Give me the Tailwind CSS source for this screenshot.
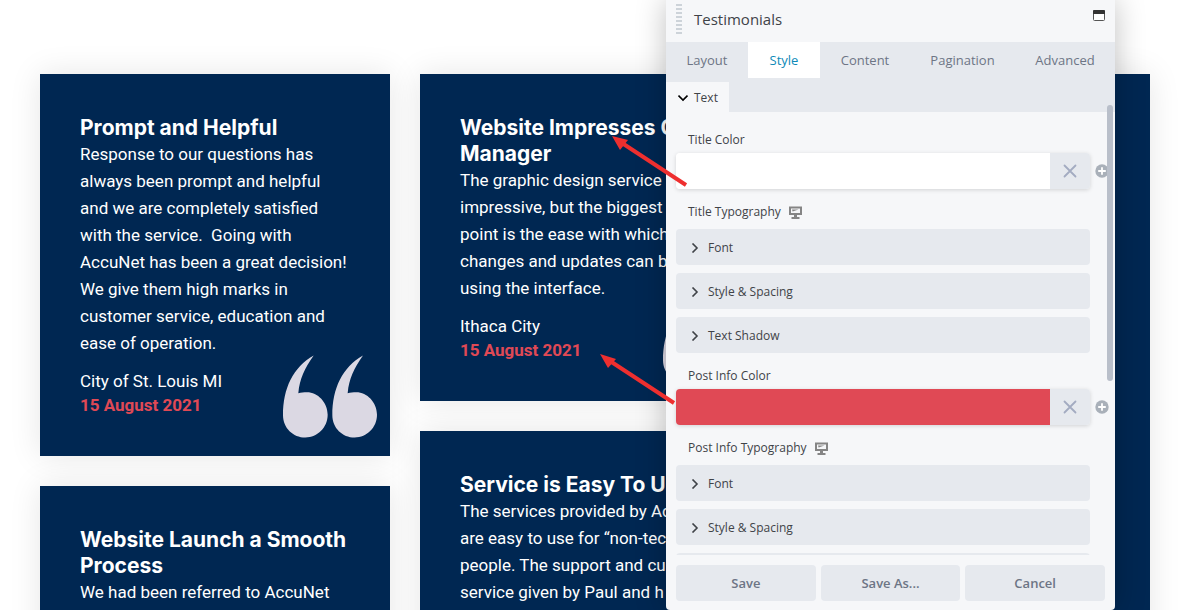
<!DOCTYPE html>
<html lang="en">
<head>
  <meta charset="UTF-8">
  <meta name="viewport" content="width=device-width, initial-scale=1.0">
  <title>Testimonials</title>
  <script src="https://cdn.jsdelivr.net/npm/@tailwindcss/browser@4"></script>
</head>
<body class="bg-white h-screen overflow-hidden relative">
  <!-- Shared icons -->
  <svg class="hidden">
    <symbol id="quote" viewBox="0 0 282 248">
      <path id="mark" d="M92 1C30 36 0 100 0 180C0 218 30 247 67 247C104 247 134 217 134 179C134 141 104 111 72 111C62 111 54 112 46 114C50 70 65 40 92 1Z" />
      <use href="#mark" x="148" />
    </symbol>
    <symbol id="chevron" viewBox="0 0 10 10">
      <path d="M2.5 .5L7 5 2.5 9.5" fill="none" stroke="currentColor" stroke-width="1.6" />
    </symbol>
    <symbol id="cross" viewBox="0 0 14 14">
      <path d="M1.5 1.5l11 11M12.5 1.5l-11 11" fill="none" stroke="currentColor" stroke-width="1.8" stroke-linecap="round" />
    </symbol>
    <symbol id="plus" viewBox="0 0 14 14">
      <circle cx="7" cy="7" r="6.7" fill="currentColor" />
      <path d="M7 3.2v7.6M3.2 7h7.6" stroke="#fff" stroke-width="1.8" />
    </symbol>
    <symbol id="desktop" viewBox="0 0 13 13">
      <path d="M1 1.5h11v6.5H1z" fill="none" stroke="currentColor" stroke-width="2" />
      <path d="M3 3.4h6.5L3.6 5.6zM5 9h3v2h2.5v2h-8v-2H5z" fill="currentColor" />
    </symbol>
  </svg>

  <main class="grid grid-cols-3 items-start gap-[30px] w-full max-w-[1190px] pl-10 pr-[33px] pt-[74px] font-[Roboto,sans-serif] text-[17px] leading-[27px] text-white">
    <div class="flex flex-col gap-[30px]">
      <article class="relative bg-[#002752] px-10 pt-[41px] pb-[39px] shadow-[0_0_30px_rgba(0,0,0,0.1)]">
        <h2 class="font-[Inter,sans-serif] font-bold text-[21px] leading-[26px] whitespace-nowrap">Prompt and Helpful</h2>
        <p class="whitespace-nowrap">Response to our questions has<br>always been prompt and helpful<br>and we are completely satisfied<br>with the service.&nbsp; Going with<br>AccuNet has been a great decision!<br>We give them high marks in<br>customer service, education and<br>ease of operation.</p>
        <div class="mt-3 leading-6">City of St. Louis MI</div>
        <div class="leading-6 font-bold text-[#e04955]">15 August 2021</div>
        <svg class="absolute right-[13px] bottom-[18px] w-[94px] h-[83px] fill-[#dbd8e3]"><use href="#quote" /></svg>
      </article>
      <article class="relative bg-[#002752] px-10 pt-[41px] pb-[39px] shadow-[0_0_30px_rgba(0,0,0,0.1)]">
        <h2 class="font-[Inter,sans-serif] font-bold text-[21px] leading-[26px] whitespace-nowrap">Website Launch a Smooth<br>Process</h2>
        <p class="whitespace-nowrap">We had been referred to AccuNet</p>
      </article>
    </div>
    <div class="flex flex-col gap-[30px]">
      <article class="relative bg-[#002752] px-10 pt-[41px] pb-[39px] shadow-[0_0_30px_rgba(0,0,0,0.1)]">
        <h2 class="font-[Inter,sans-serif] font-bold text-[21px] leading-[26px] whitespace-nowrap">Website Impresses C<br>Manager</h2>
        <p class="whitespace-nowrap">The graphic design service<br>impressive, but the biggest<br>point is the ease with which<br>changes and updates can b<br>using the interface.</p>
        <div class="mt-3 leading-6">Ithaca City</div>
        <div class="leading-6 font-bold text-[#e04955]">15 August 2021</div>
        <svg class="absolute right-[13px] bottom-[18px] w-[94px] h-[83px] fill-[#dbd8e3]"><use href="#quote" /></svg>
      </article>
      <article class="relative bg-[#002752] px-10 pt-[41px] pb-[39px] shadow-[0_0_30px_rgba(0,0,0,0.1)]">
        <h2 class="font-[Inter,sans-serif] font-bold text-[21px] leading-[26px] whitespace-nowrap">Service is Easy To Us</h2>
        <p class="whitespace-nowrap">The services provided by Ac<br>are easy to use for “non-tec<br>people. The support and cus<br>service given by Paul and h</p>
      </article>
    </div>
    <article class="h-screen bg-[#002752] shadow-[0_0_30px_rgba(0,0,0,0.1)]"></article>
  </main>

  <!-- Settings panel -->
  <section class="absolute right-[68px] top-0 w-[449px] h-full flex flex-col rounded-b bg-[#f6f7f9] shadow-[0_0_30px_rgba(0,0,0,0.25)] font-['Open_Sans',sans-serif] text-xs text-[#404348] overflow-hidden">
    <header class="h-[42px] shrink-0 flex items-center px-[10px] pb-1">
      <svg class="w-[6px] h-[30px]" viewBox="0 0 6 30" fill="#cdd3d9"><path d="M0 0h6v2H0zM0 4h6v2H0zM0 8h6v2H0zM0 12h6v2H0zM0 16h6v2H0zM0 20h6v2H0zM0 24h6v2H0zM0 28h6v2H0z" /></svg>
      <h1 class="ml-3 text-[15px]">Testimonials</h1>
      <button class="ml-auto mb-2" aria-label="Expand">
        <svg class="w-3 h-[11px]" viewBox="0 0 12 11"><rect x=".5" y=".5" width="11" height="10" rx="1" fill="#fff" stroke="#555" /><path d="M0 1q0-1 1-1h10q1 0 1 1v3H0z" fill="#333" /></svg>
      </button>
    </header>
    <div class="shrink-0 bg-[#e6e9ee]">
      <nav class="flex h-9 text-[13px] text-[#6d7585]">
        <button class="w-[82px] pt-[2px]">Layout</button>
        <button class="w-[72px] pt-[2px] bg-white text-[#0e8ab8]">Style</button>
        <button class="w-[90px] pt-[2px]">Content</button>
        <button class="w-[105px] pt-[2px]">Pagination</button>
        <button class="flex-1 pt-[2px]">Advanced</button>
      </nav>
      <button class="mt-1 h-[30px] w-[63px] pl-3 pt-[2px] flex items-center gap-[6px] bg-[#f6f7f9]">
        <svg class="w-[10px] h-[10px] rotate-90 text-black"><use href="#chevron" /></svg>Text
      </button>
    </div>
    <div class="relative flex-1 min-h-0 overflow-hidden pl-[10px] pr-[25px] pt-[19px] flex flex-col gap-[14px]">
      <div class="shrink-0">
        <label for="titleColor" class="block ml-3 leading-[18px]">Title Color</label>
        <div class="relative mt-1 flex h-9 rounded shadow-[0_1px_4px_rgba(0,0,0,0.15)]">
          <input id="titleColor" type="text" class="flex-1 min-w-0 rounded-l bg-white">
          <button class="w-10 flex items-center justify-center rounded-r bg-[#e6e9ee] text-[#a3abc1]" aria-label="Clear title color"><svg class="w-[14px] h-[14px]"><use href="#cross" /></svg></button>
          <button class="absolute -right-[19px] top-[11px] text-[#a9b0b9]" aria-label="Add title color"><svg class="w-[14px] h-[14px]"><use href="#plus" /></svg></button>
        </div>
      </div>
      <div class="shrink-0 flex flex-col gap-2">
        <div class="ml-3 leading-[18px] flex items-center gap-2">Title Typography <svg class="w-[13px] h-[13px] text-[#858585]"><use href="#desktop" /></svg></div>
        <button class="h-9 pl-[14px] pt-[2px] flex items-center gap-2 rounded bg-[#e6e9ee]"><svg class="w-[10px] h-[10px]"><use href="#chevron" /></svg>Font</button>
        <button class="h-9 pl-[14px] pt-[2px] flex items-center gap-2 rounded bg-[#e6e9ee]"><svg class="w-[10px] h-[10px]"><use href="#chevron" /></svg>Style &amp; Spacing</button>
        <button class="h-9 pl-[14px] pt-[2px] flex items-center gap-2 rounded bg-[#e6e9ee]"><svg class="w-[10px] h-[10px]"><use href="#chevron" /></svg>Text Shadow</button>
      </div>
      <div class="shrink-0">
        <label for="infoColor" class="block ml-3 leading-[18px]">Post Info Color</label>
        <div class="relative mt-1 flex h-9 rounded shadow-[0_1px_4px_rgba(0,0,0,0.15)]">
          <input id="infoColor" type="text" class="flex-1 min-w-0 rounded-l bg-[#e04955]">
          <button class="w-10 flex items-center justify-center rounded-r bg-[#e6e9ee] text-[#a3abc1]" aria-label="Clear post info color"><svg class="w-[14px] h-[14px]"><use href="#cross" /></svg></button>
          <button class="absolute -right-[19px] top-[11px] text-[#a9b0b9]" aria-label="Add post info color"><svg class="w-[14px] h-[14px]"><use href="#plus" /></svg></button>
        </div>
      </div>
      <div class="shrink-0 flex flex-col gap-2">
        <div class="ml-3 leading-[18px] flex items-center gap-2">Post Info Typography <svg class="w-[13px] h-[13px] text-[#858585]"><use href="#desktop" /></svg></div>
        <button class="h-9 pl-[14px] pt-[2px] flex items-center gap-2 rounded bg-[#e6e9ee]"><svg class="w-[10px] h-[10px]"><use href="#chevron" /></svg>Font</button>
        <button class="h-9 pl-[14px] pt-[2px] flex items-center gap-2 rounded bg-[#e6e9ee]"><svg class="w-[10px] h-[10px]"><use href="#chevron" /></svg>Style &amp; Spacing</button>
        <div class="h-9 rounded bg-[#e6e9ee]"></div>
      </div>
    </div>
    <!-- Scrollbar thumb -->
    <div class="absolute right-[2px] top-[105px] w-[6px] h-[276px] rounded-full bg-[#b9bfca]"></div>
    <footer class="shrink-0 grid grid-cols-3 gap-[5px] px-[10px] pt-[10px] pb-[9px] text-[13px] font-semibold text-[#6d7585]">
      <button class="h-9 pt-[2px] rounded-sm bg-[#e6e9ee]">Save</button>
      <button class="h-9 pt-[2px] rounded-sm bg-[#e6e9ee]">Save As...</button>
      <button class="h-9 pt-[2px] rounded-sm bg-[#e6e9ee]">Cancel</button>
    </footer>
  </section>

  <!-- Callout arrows -->
  <svg class="absolute right-[496px] top-[136px] w-[87px] h-[270px] pointer-events-none" viewBox="600 136 87 270" fill="#ee2f2f" stroke="#ee2f2f">
    <path d="M622 143L686 185M610 361L674 403" stroke-width="4" />
    <path d="M612 136l16 4-8 10zM600 354l16 5-8 9z" stroke="none" />
  </svg>
</body>
</html>
